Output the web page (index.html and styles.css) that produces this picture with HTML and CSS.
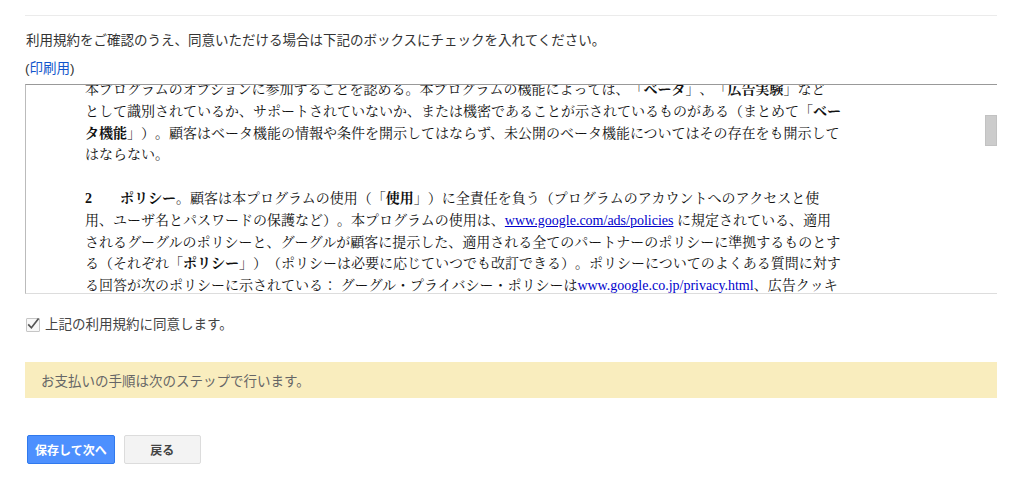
FILE: index.html
```html
<!DOCTYPE html>
<html>
<head>
    <meta charset="UTF-8">
    <title>利用規約</title>
    <link rel="stylesheet" href="styles.css">
</head>
<body>
    <div class="page">
        <div class="rule"></div>

        <p class="intro">利用規約をご確認のうえ、同意いただける場合は下記のボックスにチェックを入れてください。</p>
        <p class="print">(<a href="#">印刷用</a>)</p>

        <div class="terms">
            <div class="terms-body">
                <p>本プログラムのオプションに参加することを認める。本プログラムの機能によっては、「<b>ベータ</b>」、「<b>広告実験</b>」など<br>
                として識別されているか、サポートされていないか、または機密であることが示されているものがある（まとめて「<b>ベー<br>
                タ機能</b>」）。顧客はベータ機能の情報や条件を開示してはならず、未公開のベータ機能についてはその存在をも開示して<br>
                はならない。</p>
                <p><b class="num">2</b><b>ポリシー</b>。顧客は本プログラムの使用（「<b>使用</b>」）に全責任を負う（プログラムのアカウントへのアクセスと使<br>
                用、ユーザ名とパスワードの保護など）。本プログラムの使用は、<a href="#" class="ul">www.google.com/ads/policies</a> に規定されている、適用<br>
                されるグーグルのポリシーと、グーグルが顧客に提示した、適用される全てのパートナーのポリシーに準拠するものとす<br>
                る（それぞれ「<b>ポリシー</b>」）（ポリシーは必要に応じていつでも改訂できる）。ポリシーについてのよくある質問に対す<br>
                る回答が次のポリシーに示されている： グーグル・プライバシー・ポリシーは<a href="#">www.google.co.jp/privacy.html</a>、広告クッキ<br>
                ー・ポリシーは<a href="#">www.google.co.jp/privacy_ads.html</a>。</p>
            </div>
            <div class="thumb"></div>
        </div>

        <label class="agree">
            <span class="check">
                <svg width="14" height="14" viewBox="0 0 14 14"><path d="M2.2 7.4 L5.4 10.8 L12.6 1.6" fill="none" stroke="#555" stroke-width="1.7"/></svg>
            </span>
            上記の利用規約に同意します。
        </label>

        <div class="notice">お支払いの手順は次のステップで行います。</div>

        <div class="buttons">
            <button type="button" class="btn btn-blue">保存して次へ</button>
            <button type="button" class="btn btn-gray">戻る</button>
        </div>
    </div>
</body>
</html>
```

FILE: styles.css
```css
body {
    margin: 0;
    background-color: #fff;
    font-family: "Liberation Sans", "Noto Sans CJK JP", sans-serif;
    font-size: 13.5px;
    color: #333;
    text-spacing-trim: space-all;
}
.page {
    width: 972px;
    margin-left: 25px;
    padding-top: 15px;
}
.rule {
    border-top: 1px solid #ebebeb;
}
.intro {
    margin: 16px 0 0 1px;
    line-height: 18px;
}
.print {
    margin: 10px 0 0 0;
    line-height: 18px;
}
.print a {
    color: #15c;
    text-decoration: none;
}

.terms {
    position: relative;
    margin-top: 6px;
    width: 971px;
    height: 208px;
    overflow: hidden;
    border-top: 1px solid #999;
    border-left: 1px solid #bbb;
    border-bottom: 1px solid #ddd;
}
.terms-body {
    margin-top: -6px;
    padding-left: 59px;
    font-family: "Liberation Serif", "Noto Serif CJK JP", "Noto Sans CJK JP", serif;
    font-size: 14px;
    line-height: 21.8px;
    color: #111;
    white-space: nowrap;
}
.terms-body p {
    margin: 0 0 21.8px 0;
}
.terms-body .num {
    display: inline-block;
    width: 35px;
}
.terms-body a {
    color: #00c;
    text-decoration: none;
}
.terms-body a.ul {
    text-decoration: underline;
}
.thumb {
    position: absolute;
    right: 0;
    top: 30px;
    width: 10px;
    height: 29px;
    background-color: #ccc;
    border: 1px solid #c2c2c2;
}

.agree {
    display: flex;
    align-items: center;
    gap: 5px;
    margin-top: 24px;
    margin-left: 1px;
    line-height: 14px;
    color: #444;
}
.check {
    position: relative;
    width: 12px;
    height: 12px;
    border: 1px solid #c6c6c6;
    border-radius: 1px;
    background-color: #f8f8f8;
}
.check svg {
    position: absolute;
    left: -1px;
    top: -2px;
}

.notice {
    margin-top: 30px;
    height: 36px;
    padding-left: 16px;
    display: flex;
    align-items: center;
    background-color: #f9edbe;
    color: #666;
}

.buttons {
    display: flex;
    gap: 9px;
    margin-top: 37px;
    margin-left: 2px;
}
.btn {
    height: 29px;
    padding: 0 7px;
    border-radius: 2px;
    font-family: "Liberation Sans", "Noto Sans CJK JP", sans-serif;
    font-size: 12px;
    font-weight: bold;
    cursor: pointer;
}
.btn-blue {
    background-color: #4d90fe;
    border: 1px solid #3079ed;
    color: #fff;
}
.btn-gray {
    min-width: 77px;
    background-color: #f3f3f3;
    border: 1px solid #dcdcdc;
    color: #444;
}
```
